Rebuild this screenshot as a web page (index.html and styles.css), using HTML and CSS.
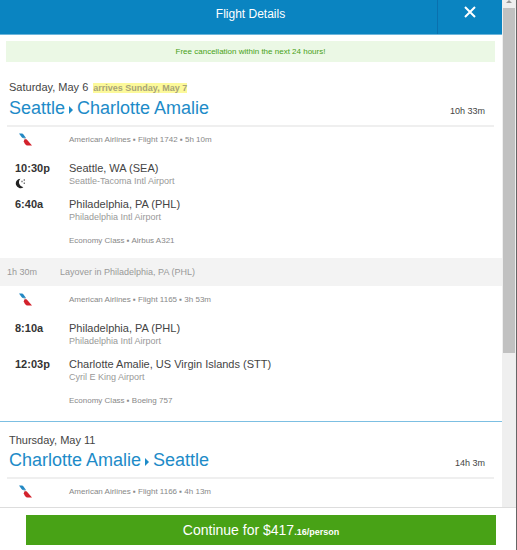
FILE: index.html
```html
<!DOCTYPE html>
<html lang="en">
<head>
    <meta charset="UTF-8">
    <title>Flight Details</title>
    <meta name="viewport" content="width=device-width, initial-scale=1.0">
    <link rel="stylesheet" href="styles.css">
</head>
<body>
    <svg class="sprite" aria-hidden="true">
        <symbol id="aa-logo" viewBox="0 0 13 13">
            <path d="M0 .5h2.800c.8 0 1.300.3 1.700.9L7 5H4.800C3.400 5 2.400 3.900 1.800 2.900z" fill="#2389c4"/>
            <path d="M4.200 4.800h2.800l-.4 1.500.6 1.200-1.400 1.200z" fill="#c3c9ce"/>
            <path d="M4.800 8.200c.4-1.600 1.600-2.200 3-1.600L13 12.600H8.400C6.800 12.600 5.400 10.500 4.800 8.200z" fill="#d3222c"/>
        </symbol>
        <symbol id="moon" viewBox="0 0 11 11">
            <path d="M5.400.8A4.700 4.700 0 1 0 8.400 9.200 5 5 0 0 1 5.400.8z" fill="#222"/>
            <path d="M6.300 2.800h1.400v1.400H6.300zM8.600 1.300H10v1.400H8.600zM8.600 4.600H10V6H8.600z" fill="#777"/>
        </symbol>
    </svg>

    <div class="viewport">
        <main class="content">
            <header class="header">
                <h1>Flight Details</h1>
                <button class="close-btn" aria-label="Close">
                    <svg viewBox="0 0 12 12"><path d="M1 1l10 10M11 1L1 11"/></svg>
                </button>
            </header>

            <p class="notice">Free cancellation within the next 24 hours!</p>

            <section class="trip">
                <div class="trip-head">
                    <div>
                        <p class="date">Saturday, May 6 <span class="arrives">arrives Sunday, May 7</span></p>
                        <h2>Seattle<i class="arrow"></i>Charlotte Amalie</h2>
                    </div>
                    <span class="duration">10h 33m</span>
                </div>
                <div class="segment">
                    <svg class="airline"><use href="#aa-logo"/></svg>
                    <p class="meta">American Airlines ▪ Flight 1742 ▪ 5h 10m</p>
                    <div class="time first">10:30p<svg class="moon"><use href="#moon"/></svg></div>
                    <div class="place first">Seattle, WA (SEA)<small>Seattle-Tacoma Intl Airport</small></div>
                    <div class="time">6:40a</div>
                    <div class="place">Philadelphia, PA (PHL)<small>Philadelphia Intl Airport</small></div>
                    <p class="meta cabin">Economy Class ▪ Airbus A321</p>
                </div>
                <div class="layover"><span>1h 30m</span><span>Layover in Philadelphia, PA (PHL)</span></div>
                <div class="segment">
                    <svg class="airline"><use href="#aa-logo"/></svg>
                    <p class="meta">American Airlines ▪ Flight 1165 ▪ 3h 53m</p>
                    <div class="time first">8:10a</div>
                    <div class="place first">Philadelphia, PA (PHL)<small>Philadelphia Intl Airport</small></div>
                    <div class="time">12:03p</div>
                    <div class="place">Charlotte Amalie, US Virgin Islands (STT)<small>Cyril E King Airport</small></div>
                    <p class="meta cabin">Economy Class ▪ Boeing 757</p>
                </div>
            </section>

            <section class="trip">
                <div class="trip-head">
                    <div>
                        <p class="date">Thursday, May 11</p>
                        <h2>Charlotte Amalie<i class="arrow"></i>Seattle</h2>
                    </div>
                    <span class="duration">14h 3m</span>
                </div>
                <div class="segment">
                    <svg class="airline"><use href="#aa-logo"/></svg>
                    <p class="meta">American Airlines ▪ Flight 1166 ▪ 4h 13m</p>
                </div>
            </section>
        </main>
        <div class="scrollbar"><i class="scroll-up"></i><div class="thumb"></div></div>
    </div>

    <footer class="footer">
        <button class="continue-btn">Continue for $417<small>.16/person</small></button>
    </footer>
</body>
</html>
```

FILE: styles.css
```css
* { box-sizing: border-box; }
body { display: flex; flex-direction: column; height: 100vh; margin: 0; border-right: 1px solid #666; background: #fff; color: #444; font: 11px/14px "Liberation Sans", Arial, sans-serif; overflow: hidden; }
h1, h2, p { margin: 0; font-weight: normal; }
button { border: 0; padding: 0; color: #fff; font-family: inherit; cursor: pointer; }
.sprite { display: none; }

.viewport { display: flex; flex: 1; min-height: 0; }
.content { flex: 1; overflow: hidden; }

/* header */
.header { display: flex; height: 35px; background: #0a84c1; border-bottom: 1px solid #6db5db; color: #fff; }
.header h1 { flex: 1; padding: 7px 0 0 64px; font-size: 12px; line-height: 14px; text-align: center; }
.close-btn { width: 65px; padding-bottom: 10px; background: none; border-left: 1px solid #0a70ae; }
.close-btn svg { display: block; width: 12px; height: 12px; margin: 0 auto; fill: none; stroke: #fff; stroke-width: 2; }
.notice { margin: 6px 7px 0 6px; background: #ebf8e5; color: #48a216; font-size: 8px; line-height: 21px; text-align: center; }

/* trips */
.trip { padding: 11px 0 3px; border-bottom: 1px solid #7cbfe2; }
.notice + .trip { padding-top: 18px; }
.trip:last-child { border-bottom: 0; }
.trip-head { display: flex; justify-content: space-between; align-items: flex-end; margin: 0 8px 0 7px; padding: 0 9px 6px 2px; border-bottom: 2px solid #efefef; }
.trip-head h2 { margin-top: 2px; color: #1d8bc8; font-size: 18px; line-height: 22px; }
.arrow { display: inline-block; margin: 0 4px; border: 4px solid transparent; border-left-color: #1d8bc8; border-right: 0; }
.arrives { margin-left: 2px; background: #fcf99a; color: #a8a478; font-size: 9px; font-weight: bold; }
.duration { font-size: 9px; line-height: 16px; }

.segment { display: grid; grid-template-columns: 54px 1fr; row-gap: 10px; padding: 6px 15px 10px; }
.airline { width: 13px; height: 13px; margin-left: 4px; }
.meta { color: #888; font-size: 8px; line-height: 14px; }
.cabin { grid-column: 2; margin-top: 1px; }
.time { color: #333; font-weight: bold; }
.first { margin-top: 4px; }
.moon { display: block; width: 11px; height: 11px; margin-top: 3px; margin-bottom: -3px; }
.place small { display: block; color: #999; font-size: 9px; line-height: 12px; }
.layover { display: grid; grid-template-columns: 53px 1fr; margin-bottom: 1px; padding: 0 7px; background: #f3f3f3; color: #999; font-size: 9px; line-height: 28px; }

/* scrollbar */
.scrollbar { width: 14px; padding: 0 1px; background: #efefef; }
.scroll-up { display: block; width: 6px; margin: 0 auto 5px; border: 3px solid transparent; border-top: 0; border-bottom: 3px solid #999; }
.thumb { height: 68%; background: #c1c1c1; }

.footer { padding: 7px 20px 5px 26px; border-top: 1px solid #ddd; }
.continue-btn { display: block; width: 100%; height: 30px; background: #48a216; font-size: 14px; }
.continue-btn small { font-size: 9px; font-weight: bold; }
```
